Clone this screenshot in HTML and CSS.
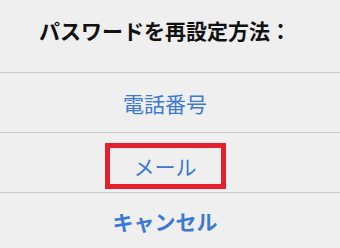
FILE: index.html
```html
<!DOCTYPE html>
<html lang="ja">
<head>
    <meta charset="UTF-8">
    <meta name="viewport" content="width=device-width, initial-scale=1.0">
    <title>パスワード再設定</title>
    <link rel="stylesheet" href="styles.css">
</head>
<body>
    <div class="sheet">
        <div class="sheet-title">パスワードを再設定方法：</div>
        <div class="sheet-option">電話番号</div>
        <div class="sheet-option">
            <span class="mark">メール</span>
        </div>
        <div class="sheet-option sheet-cancel">キャンセル</div>
    </div>
</body>
</html>
```

FILE: styles.css
```css
body {
    margin: 0;
    background-color: #efefef;
    font-family: "Noto Sans CJK JP", "Noto Sans", sans-serif;
    overflow: hidden;
}

.sheet {
    display: flex;
    flex-direction: column;
    width: 340px;
    height: 248px;
}

.sheet-title {
    height: 60px;
    padding: 0 10px 12px 0;
    display: flex;
    align-items: center;
    justify-content: center;
    font-size: 21px;
    font-weight: bold;
    color: #111111;
    border-bottom: 1px solid #c9c9c9;
}

.sheet-option {
    height: 59px;
    padding-right: 10px;
    display: flex;
    align-items: center;
    justify-content: center;
    font-size: 21px;
    color: #3b79d4;
    border-bottom: 1px solid #c9c9c9;
}

/* 赤枠で強調 */
.mark {
    display: flex;
    align-items: center;
    justify-content: center;
    box-sizing: border-box;
    width: 121px;
    height: 46px;
    margin-top: 6px;
    border: 5px solid #e3202b;
}

.sheet-cancel {
    flex: 1;
    border-bottom: none;
    font-weight: bold;
}
```
